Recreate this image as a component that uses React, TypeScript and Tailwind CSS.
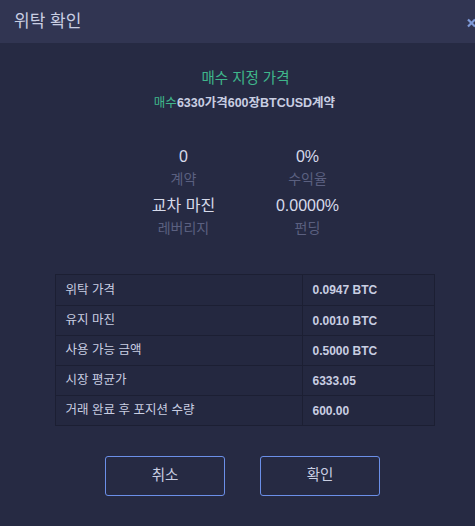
import React from "react";

const rows: [string, string][] = [
  ["위탁 가격", "0.0947 BTC"],
  ["유지 마진", "0.0010 BTC"],
  ["사용 가능 금액", "0.5000 BTC"],
  ["시장 평균가", "6333.05"],
  ["거래 완료 후 포지션 수량", "600.00"],
];

export default function App() {
  return (
    <div
      className="w-[475px] h-[526px] bg-[#262a43] overflow-hidden flex flex-col"
      style={{ fontFamily: '"Liberation Sans", "Noto Sans CJK KR", sans-serif' }}
    >
      <div className="h-[43px] bg-[#313552] flex items-center justify-between pl-[14px] shrink-0">
        <span className="text-[17px] text-[#c9cee2]">위탁 확인</span>
        <svg width="8" height="10" viewBox="0 0 8 10" className="mt-[2px]">
          <path d="M1 1.5 L8 8.5 M8 1.5 L1 8.5" stroke="#7f9ad8" strokeWidth="2.2" />
        </svg>
      </div>
      <div className="flex flex-col items-center pt-[25px]">
        <div className="text-[14.5px] text-[#3fb68b] leading-[20px] ml-[16px]">매수 지정 가격</div>
        <div className="text-[12.5px] font-bold text-[#c9cee2] leading-[18px] mt-[6px] ml-[14px]">
          <span className="text-[#3fb68b] font-normal">매수</span>6330가격600장BTCUSD계약
        </div>
        <div className="grid grid-cols-[124px_124px] mt-[34px] ml-[16px]">
          <div className="flex flex-col items-center">
            <div className="text-[16px] text-[#d6daea] leading-[22px]">0</div>
            <div className="text-[14px] text-[#5b6080] leading-[20px] mt-[1px]">계약</div>
          </div>
          <div className="flex flex-col items-center">
            <div className="text-[16px] text-[#d6daea] leading-[22px]">0%</div>
            <div className="text-[14px] text-[#5b6080] leading-[20px] mt-[1px]">수익율</div>
          </div>
          <div className="flex flex-col items-center mt-[6px]">
            <div className="text-[16px] text-[#d6daea] leading-[22px]">교차 마진</div>
            <div className="text-[14px] text-[#5b6080] leading-[20px] mt-[1px]">레버리지</div>
          </div>
          <div className="flex flex-col items-center mt-[6px]">
            <div className="text-[16px] text-[#d6daea] leading-[22px]">0.0000%</div>
            <div className="text-[14px] text-[#5b6080] leading-[20px] mt-[1px]">펀딩</div>
          </div>
        </div>
        <div className="mt-[36px] w-[380px] ml-[14px] border border-[#1c1f33] bg-[#242840]">
          {rows.map(([k, v], i) => (
            <div
              key={k}
              className={`flex h-[30px] ${i > 0 ? "border-t border-[#1c1f33]" : ""}`}
            >
              <div className="w-[247px] border-r border-[#1c1f33] flex items-center pl-[10px] text-[12.5px] text-[#c9cee2]">
                {k}
              </div>
              <div className="flex-1 flex items-center pl-[10px] text-[12px] font-bold text-[#c9cee2]">
                {v}
              </div>
            </div>
          ))}
        </div>
        <div className="flex gap-[35px] mt-[30px] ml-[10px]">
          <button className="w-[120px] h-[40px] border border-[#6b8fe8] rounded-[3px] text-[14.5px] text-[#c9cee2] bg-transparent">
            취소
          </button>
          <button className="w-[120px] h-[40px] border border-[#6b8fe8] rounded-[3px] text-[14.5px] text-[#c9cee2] bg-transparent">
            확인
          </button>
        </div>
      </div>
    </div>
  );
}
